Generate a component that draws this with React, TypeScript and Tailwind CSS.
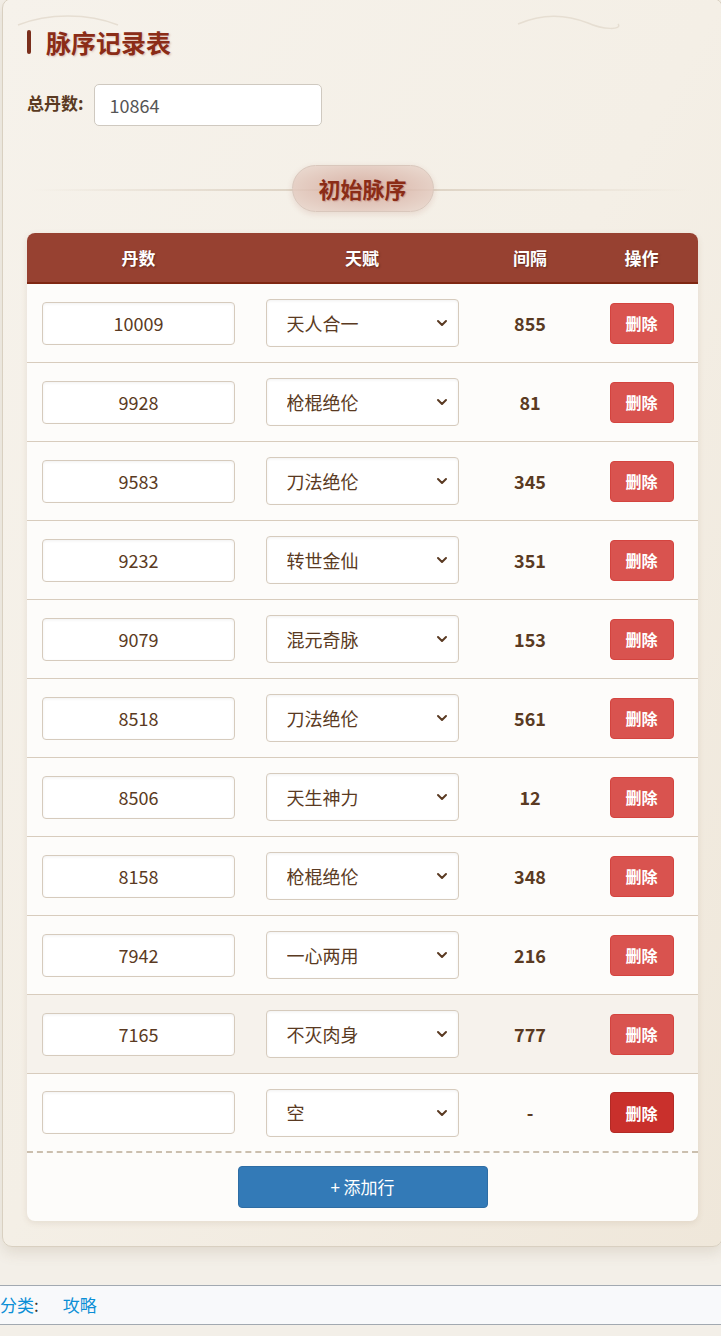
import React from 'react';

const rows = [
  { dan: '10009', talent: '天人合一', gap: '855' },
  { dan: '9928', talent: '枪棍绝伦', gap: '81' },
  { dan: '9583', talent: '刀法绝伦', gap: '345' },
  { dan: '9232', talent: '转世金仙', gap: '351' },
  { dan: '9079', talent: '混元奇脉', gap: '153' },
  { dan: '8518', talent: '刀法绝伦', gap: '561' },
  { dan: '8506', talent: '天生神力', gap: '12' },
  { dan: '8158', talent: '枪棍绝伦', gap: '348' },
  { dan: '7942', talent: '一心两用', gap: '216' },
  { dan: '7165', talent: '不灭肉身', gap: '777' },
  { dan: '', talent: '空', gap: '-' },
];

const talents = ['空', '天人合一', '枪棍绝伦', '刀法绝伦', '转世金仙', '混元奇脉', '天生神力', '一心两用', '不灭肉身'];

function Chevron() {
  return (
    <svg
      width="12"
      height="8"
      viewBox="0 0 12 8"
      fill="none"
      stroke="#5a3a22"
      strokeWidth="2"
      strokeLinecap="round"
      strokeLinejoin="round"
      className="pointer-events-none absolute right-[11px] top-1/2 -translate-y-1/2"
    >
      <path d="M2 2l4 4 4-4" />
    </svg>
  );
}

export default function App() {
  return (
    <div
      className="relative w-[721px] min-h-[1336px] overflow-hidden bg-[#f3efe8] text-[#5a3a22]"
      style={{ fontFamily: '"Noto Sans CJK SC", "Noto Sans", sans-serif' }}
    >
      {/* main panel */}
      <div className="relative ml-[2px] -mt-[2px] w-[721px] rounded-[10px] border border-[#d9d0c1] bg-gradient-to-br from-[#f6f2eb] via-[#f4efe6] to-[#efe7da] px-[24px] pt-[28px] pb-[25px] shadow-[0_6px_14px_rgba(120,100,70,0.15)]">
        {/* faint waves */}
        <svg className="pointer-events-none absolute left-0 top-0" width="721" height="40" viewBox="0 0 721 40" fill="none">
          <path d="M15 26 C45 14 85 14 115 26" stroke="#e6ded2" strokeWidth="1.5" />
          <path d="M515 25 C540 14 565 16 585 24 C600 31 620 31 615 25" stroke="#e6ded2" strokeWidth="1.5" />
        </svg>

        {/* title */}
        <div className="relative flex items-center gap-[15px]">
          <span className="h-[24px] w-[4px] rounded-full bg-[#7a2f1c]" />
          <h1 className="text-[25px] font-bold leading-[30px] text-[#8b2c17] [text-shadow:1px_1px_2px_rgba(139,44,23,0.25)]">
            脉序记录表
          </h1>
        </div>

        {/* total */}
        <div className="mt-[27px] flex items-start gap-[10px]">
          <label className="pt-[6px] text-[17px] font-bold text-[#5a3a22]">总丹数:</label>
          <input
            defaultValue="10864"
            className="h-[42px] w-[228px] rounded-[5px] border border-[#cfc9c0] bg-white px-[15px] text-[18px] text-[#555] outline-none"
          />
        </div>

        {/* section divider */}
        <div className="relative mt-[39px] flex justify-center">
          <div className="absolute left-[4px] right-[6px] top-1/2 h-[2px] bg-gradient-to-r from-transparent via-[#d8ccbc] to-transparent" />
          <div
            className="relative flex h-[47px] w-[142px] items-center justify-center rounded-full border border-[#d9c7bc] shadow-[0_2px_6px_rgba(139,44,23,0.12)]"
            style={{ background: 'radial-gradient(ellipse at center, rgba(210,165,152,0.85) 0%, rgba(234,218,208,0.85) 100%)' }}
          >
            <span className="text-[22px] font-bold text-[#8b2c17] [text-shadow:1px_1px_1px_rgba(139,44,23,0.25)]">初始脉序</span>
          </div>
        </div>

        {/* table */}
        <div className="mt-[21px] overflow-hidden rounded-[8px] bg-[#fdfcfa] shadow-[0_2px_6px_rgba(120,90,60,0.12)]">
          <div className="grid h-[51px] grid-cols-[223px_224px_112px_111px] items-center border-b-2 border-[#7f2712] bg-[#974131] text-[17px] font-bold text-white [text-shadow:1px_1px_2px_rgba(0,0,0,0.35)]">
            <div className="text-center">丹数</div>
            <div className="text-center">天赋</div>
            <div className="text-center">间隔</div>
            <div className="text-center">操作</div>
          </div>

          {rows.map((r, i) => {
            const last = i === rows.length - 1;
            return (
              <div
                key={i}
                className={
                  'grid h-[79px] grid-cols-[223px_224px_112px_111px] items-center ' +
                  (last ? 'border-b-2 border-dashed border-[#cbbfae] ' : 'border-b border-[#d8ccbd] ') +
                  (i === 9 ? 'bg-[#f6f2ec]' : 'bg-[#fdfcfa]')
                }
              >
                <div className="flex justify-center">
                  <input
                    defaultValue={r.dan}
                    className="h-[43px] w-[193px] rounded-[4px] border border-[#d6cbbd] bg-white text-center text-[18px] text-[#5a3a22] shadow-[inset_0_1px_3px_rgba(0,0,0,0.06)] outline-none"
                  />
                </div>
                <div className="flex justify-center">
                  <div className="relative">
                    <select
                      defaultValue={r.talent}
                      className="h-[48px] w-[193px] appearance-none rounded-[4px] border border-[#d6cbbd] bg-white pl-[20px] text-[18px] text-[#5a3a22] shadow-[inset_0_1px_3px_rgba(0,0,0,0.06)] outline-none"
                    >
                      {talents.map((t) => (
                        <option key={t} value={t}>
                          {t}
                        </option>
                      ))}
                    </select>
                    <Chevron />
                  </div>
                </div>
                <div className="text-center text-[18px] font-bold text-[#5a3a22]">{r.gap}</div>
                <div className="flex justify-center">
                  <button
                    className={
                      'h-[41px] w-[64px] rounded-[4px] border text-[16px] font-bold text-white ' +
                      (last ? 'border-[#b32a25] bg-[#c9302c]' : 'border-[#d4443f] bg-[#d9534f]')
                    }
                  >
                    删除
                  </button>
                </div>
              </div>
            );
          })}

          <div className="flex justify-center pt-[13px] pb-[13px]">
            <button className="h-[42px] w-[250px] rounded-[4px] border border-[#2e6da4] bg-[#337ab7] text-[17px] text-white">
              + 添加行
            </button>
          </div>
        </div>
      </div>

      {/* footer categories */}
      <div className="mt-[38px] flex h-[40px] items-center border-y border-[#a2a9b1] bg-[#f8f9fb] text-[17px]">
        <span className="text-[#0b8fd6]">分类</span>
        <span className="text-[#333]">:</span>
        <span className="ml-[24px] text-[#0b8fd6]">攻略</span>
      </div>
    </div>
  );
}
